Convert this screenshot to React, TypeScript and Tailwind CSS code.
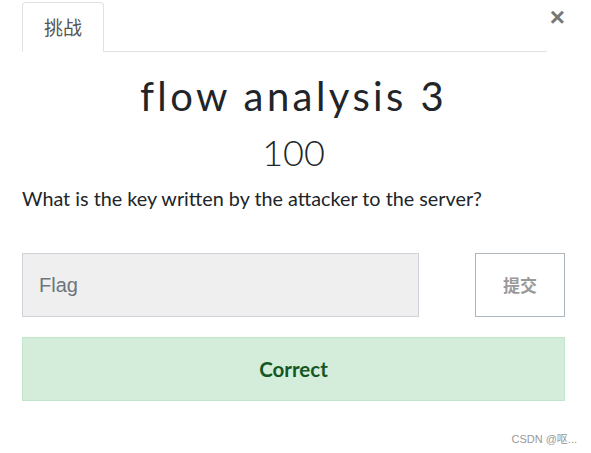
export default function App() {
  return (
    <div className="relative h-[453px] w-[591px] overflow-hidden bg-white font-['Lato',sans-serif]">
      <div className="ml-[22px] w-[525px] pt-[2px]">
        <div className="flex border-b border-[#dee2e6]">
          <div className="-mb-px flex h-[50px] w-[82px] items-center justify-center rounded-t-[4px] border border-b-white border-[#dee2e6] bg-white font-['Noto_Sans_CJK_SC',sans-serif] text-[19px] text-[#555]">
            挑战
          </div>
        </div>
      </div>
      <button
        type="button"
        className="absolute right-[26px] top-[4px] font-['Liberation_Sans',sans-serif] text-[26px] font-bold leading-none text-[#777]"
      >
        ×
      </button>

      <div className="mx-[22px] mt-[20px] w-[543px]">
        <h1 className="text-center text-[40px] font-normal leading-[48px] tracking-[0.085em] text-[#212529]">
          flow analysis 3
        </h1>
        <p className="mt-[11px] text-center text-[36px] font-light leading-[42px] text-[#212529]">100</p>
        <p className="mt-[11px] text-[19.8px] leading-[28px] text-[#212529]">
          What is the key written by the attacker to the server?
        </p>

        <div className="mt-[41px] flex items-stretch justify-between">
          <div className="flex h-[64px] w-[397px] items-center border border-[#ced4da] bg-[#efefef] px-[16px] font-['Liberation_Sans',sans-serif] text-[20px] text-[#6c757d]">
            Flag
          </div>
          <button
            type="button"
            className="h-[64px] w-[90px] border border-[#adb5bd] bg-white font-['Noto_Sans_CJK_SC',sans-serif] text-[17px] font-bold text-[#999]"
          >
            提交
          </button>
        </div>

        <div className="mt-[20px] flex h-[64px] items-center justify-center border border-[#c3e6cb] bg-[#d4edda] text-[20.5px] font-bold text-[#155724]">
          Correct
        </div>
      </div>

      <div className="absolute right-[14px] top-[431px] font-['Liberation_Sans','Noto_Sans_CJK_SC',sans-serif] text-[11px] text-[#999]">
        CSDN @呕...
      </div>
    </div>
  );
}
